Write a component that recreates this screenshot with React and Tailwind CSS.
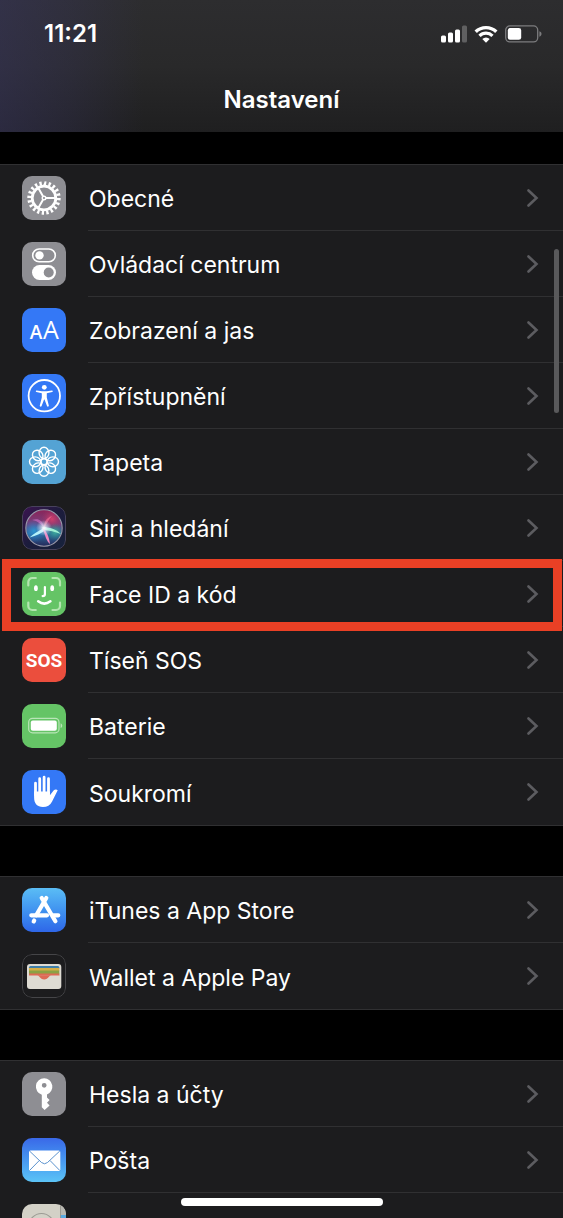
import clsx from "clsx";

function Tile({ className, children }) {
  return (
    <svg
      viewBox="0 0 44 44"
      className={clsx("h-11 w-11 shrink-0 rounded-[10px]", className)}
      fill="none"
      aria-hidden="true"
    >
      {children}
    </svg>
  );
}

function GearIcon() {
  return (
    <Tile className="bg-[#8e8e93]">
      <g stroke="#fff">
        <circle cx="22" cy="22" r="11.8" strokeWidth="2.8" />
        <circle cx="22" cy="22" r="14.8" strokeWidth="3.8" pathLength="80" strokeDasharray="2 2" />
        <circle cx="22" cy="22" r="1.8" strokeWidth="1.4" />
        <path d="M24 22H34M21 20.3 16 11.6M21 23.7 16 32.4" strokeWidth="2" />
      </g>
    </Tile>
  );
}

function ControlCenterIcon() {
  return (
    <Tile className="bg-[#8e8e93]">
      <rect x="10.7" y="7" width="22.6" height="12.8" rx="6.4" stroke="#fff" strokeWidth="1.6" />
      <circle cx="17.5" cy="13.4" r="4.2" fill="#fff" />
      <rect x="10" y="23" width="24" height="15" rx="7.5" fill="#fff" />
      <circle cx="26.7" cy="30.5" r="5" fill="#8e8e93" />
    </Tile>
  );
}

function DisplayIcon() {
  return (
    <Tile className="bg-[#3478f6]">
      <g fill="#fff" fontFamily="'Open Sans', sans-serif" textAnchor="middle">
        <text x="14" y="30.7" fontSize="19" fontWeight="600">A</text>
        <text x="29" y="30.7" fontSize="25" fontWeight="500">A</text>
      </g>
    </Tile>
  );
}

function AccessibilityIcon() {
  return (
    <Tile className="bg-[#3478f6]">
      <circle cx="22.3" cy="21.7" r="15.7" stroke="#fff" strokeWidth="1.8" />
      <circle cx="22.3" cy="13.3" r="2.4" fill="#fff" />
      <path
        d="M14.6 16.6c-.9-.1-1.1 1.2-.2 1.5l5.4 1.2v4.2l-2 8c-.3 1.2 1.4 1.6 1.8.5l2.500-6.600h.4l2.500 6.600c.4 1.100 2.100.7 1.800-.5l-2-8v-4.200l5.400-1.200c.9-.3.7-1.600-.2-1.500l-5.300.6h-4.800Z"
        fill="#fff"
      />
    </Tile>
  );
}

function WallpaperIcon() {
  return (
    <Tile className="bg-[#54a3d4]">
      <g stroke="#fff" strokeWidth="1.4">
        {[0, 45, 90, 135, 180, 225, 270, 315].map((angle) => (
          <ellipse key={angle} cx="22" cy="12.900" rx="4.900" ry="5.600" transform={`rotate(${angle} 22 21.8)`} />
        ))}
        <circle cx="22" cy="21.8" r="3" />
      </g>
    </Tile>
  );
}

function SiriIcon() {
  return (
    <Tile>
      <defs>
        <linearGradient id="siri-tile" x1="0" y1="0" x2="1" y2="1">
          <stop stopColor="#3b1450" />
          <stop offset=".5" stopColor="#1c1c3c" />
          <stop offset="1" stopColor="#17233c" />
        </linearGradient>
        <linearGradient id="siri-orb" x1="22" y1="4" x2="22" y2="40" gradientUnits="userSpaceOnUse">
          <stop stopColor="#8a2459" />
          <stop offset=".4" stopColor="#76427f" />
          <stop offset=".65" stopColor="#2d6fa0" />
          <stop offset="1" stopColor="#25295a" />
        </linearGradient>
        <radialGradient id="siri-teal" cx="12" cy="25" r="12" gradientUnits="userSpaceOnUse">
          <stop stopColor="#2c97d0" />
          <stop offset="1" stopColor="#2c70c0" stopOpacity="0" />
        </radialGradient>
        <radialGradient id="siri-red" cx="30" cy="13" r="11" gradientUnits="userSpaceOnUse">
          <stop stopColor="#d23f6d" />
          <stop offset="1" stopColor="#a03060" stopOpacity="0" />
        </radialGradient>
        <radialGradient id="siri-green" cx="33" cy="26" r="9" gradientUnits="userSpaceOnUse">
          <stop stopColor="#3fae9d" />
          <stop offset="1" stopColor="#2c7f80" stopOpacity="0" />
        </radialGradient>
        <radialGradient id="siri-glow" cx="22" cy="22" r="8" gradientUnits="userSpaceOnUse">
          <stop stopColor="#fff" />
          <stop offset="1" stopColor="#bfe8ff" stopOpacity="0" />
        </radialGradient>
      </defs>
      <rect x=".5" y=".5" width="43" height="43" rx="9.5" fill="url(#siri-tile)" stroke="#48425c" />
      <circle cx="22" cy="22" r="18" fill="url(#siri-orb)" />
      <circle cx="22" cy="22" r="18" fill="url(#siri-teal)" />
      <circle cx="22" cy="22" r="18" fill="url(#siri-red)" />
      <circle cx="22" cy="22" r="18" fill="url(#siri-green)" />
      <path d="M22 22C21 14 16 12 10 14c6 1 9 4 12 8Z" fill="#c76cc0" opacity=".7" />
      <path d="M22 22c0-6 2-10 8-12-4 4-5 8-8 12Z" fill="#f06c96" opacity=".7" />
      <path d="M24 21C20 23 14 26 7.5 31.5 14 30 20 27 25 23Z" fill="#b6f3fa" />
      <path d="M20 21.5C27 21 34 22.5 39 28 33 25.5 27 24.5 21 24Z" fill="#9ff0d4" />
      <path d="M20.5 21C25 26 27 31 28 38 25 36 23 30 20.5 21Z" fill="#ef87c3" />
      <circle cx="22" cy="22" r="8" fill="url(#siri-glow)" />
      <circle cx="22" cy="22" r="18.2" stroke="#9a9aab" strokeWidth="1.1" />
    </Tile>
  );
}

function FaceIdIcon() {
  return (
    <Tile className="bg-[#65c466]">
      <g strokeLinecap="round" strokeLinejoin="round">
        <path
          d="M6.3 13.5V10a4 4 0 0 1 4-4h3.5M30.5 6H34a4 4 0 0 1 4 4v3.5M38 30.5V34a4 4 0 0 1-4 4h-3.5M13.8 38h-3.5a4 4 0 0 1-4-4v-3.5"
          stroke="#b4e5b0"
          strokeWidth="2.2"
        />
        <path d="M22.9 15v7.2q0 1.9-2.3 1.9" stroke="#fff" strokeWidth="2.2" />
        <path d="M16.2 29.3q6 4.6 12.2 0" stroke="#fff" strokeWidth="2.6" />
      </g>
      <ellipse cx="13.9" cy="16.2" rx="1.9" ry="2.9" fill="#fff" />
      <ellipse cx="30.2" cy="16.2" rx="1.9" ry="2.9" fill="#fff" />
    </Tile>
  );
}

function SosIcon() {
  return (
    <Tile className="bg-[#eb4e3d]">
      <text
        x="22"
        y="29"
        textAnchor="middle"
        fill="#fff"
        fontFamily="Roboto, sans-serif"
        fontWeight="700"
        fontSize="19"
      >
        SOS
      </text>
    </Tile>
  );
}

function BatteryTileIcon() {
  return (
    <Tile className="bg-[#65c466]">
      <rect x="6.7" y="14.4" width="30.3" height="14.4" rx="3.8" stroke="#b9e5b7" strokeWidth="1.2" />
      <rect x="8.8" y="16.5" width="26" height="10.3" rx="2" fill="#fff" />
      <path d="M38.6 19.2c2.2.8 2.2 4 0 4.8Z" fill="#b9e5b7" />
    </Tile>
  );
}

function HandIcon() {
  return (
    <Tile className="bg-[#3478f6]">
      <path
        d="M13.5 13.2V25M17.7 8.7V24M22.1 7.2V24M26.5 8.7V24"
        stroke="#fff"
        strokeWidth="2.8"
        strokeLinecap="round"
      />
      <path
        d="M12.1 21.5h15.8v3.8l3.7-4.7c1.1-1.4 3.1-1.5 4.100-.4l-5.600 11.200c-1.900 3.900-4.900 5.600-9.200 5.600-5.800 0-8.800-3.700-8.800-9.500Z"
        fill="#fff"
      />
    </Tile>
  );
}

function AppStoreIcon() {
  return (
    <Tile className="bg-linear-to-b from-[#5bbdf5] to-[#2f66e8]">
      <g stroke="#fff" strokeWidth="4.2" strokeLinecap="round">
        <path d="M24.3 10 14.200 27.300M12.200 32.500l-.5.9M19.700 10 33.400 33.300" />
        <path d="M9.300 27.300H25M31.500 27.300h4.800" />
      </g>
    </Tile>
  );
}

function WalletIcon() {
  return (
    <Tile>
      <rect x=".5" y=".5" width="43" height="43" rx="9.5" fill="#1c1c1e" stroke="#454548" />
      <rect x="5" y="10" width="34.3" height="25" rx="3" fill="#dedbd3" />
      <path d="M7 14.500V13.500Q7 12 8.500 12h27.300q1.500 0 1.500 1.500v1Z" fill="#3f7fa8" />
      <path d="M7 14h30.300v3H7z" fill="#d5ad45" />
      <path d="M7 16.500h30.300v4H7z" fill="#8ba144" />
      <path d="M7 19.500h30.300V22H7z" fill="#dd6a55" />
      <path d="M7 21.500h30.300V33H7Z" fill="#dedbd3" />
      <path d="M15.300 21.300c2 0 2.500 4.200 6.900 4.200s4.900-4.200 6.900-4.200Z" fill="#dd6a55" />
    </Tile>
  );
}

function KeyIcon() {
  return (
    <Tile className="bg-[#8e8e93]">
      <path
        d="M22.200 6.200a8.500 8.500 0 0 0-2.400 16.600V35.200l2.800 2.800 5-4.600-2.600-2.600 2.600-2.700-2.600-2.600v-2.900A8.500 8.500 0 0 0 22.200 6.200Zm0 4.700a2.400 2.400 0 1 1 0 4.800 2.400 2.400 0 0 1 0-4.800Z"
        fill="#fff"
        fillRule="evenodd"
      />
    </Tile>
  );
}

function MailIcon() {
  return (
    <Tile className="bg-linear-to-b from-[#3a68e8] to-[#5cc3f6]">
      <rect x="7" y="12.5" width="31.3" height="20.5" rx="1.5" fill="#fff" />
      <path
        d="M7.500 13l12 11.500q3 2.600 6 0L37.800 13M7.500 32.500l9.800-10M37.800 32.500l-9.800-10"
        stroke="#4a87c8"
        strokeWidth=".9"
      />
    </Tile>
  );
}

function ContactsIcon() {
  return (
    <Tile className="bg-[#d3d1c7]">
      <path d="M38.500 0H44v11h-5.500z" fill="#b9b8b2" />
      <path d="M38.500 11H44v11h-5.500z" fill="#58a9e0" />
      <path d="M38.500 22H44v22h-5.500z" fill="#e0a050" />
      <path d="M38.500 0v44" stroke="#8f8e88" strokeWidth=".8" />
      <circle cx="19.5" cy="22" r="12.5" stroke="#9c9b94" strokeWidth="1.2" />
    </Tile>
  );
}

const groups = [
  [
    { label: "Obecné", Icon: GearIcon },
    { label: "Ovládací centrum", Icon: ControlCenterIcon },
    { label: "Zobrazení a jas", Icon: DisplayIcon },
    { label: "Zpřístupnění", Icon: AccessibilityIcon },
    { label: "Tapeta", Icon: WallpaperIcon },
    { label: "Siri a hledání", Icon: SiriIcon },
    { label: "Face ID a kód", Icon: FaceIdIcon, highlighted: true },
    { label: "Tíseň SOS", Icon: SosIcon },
    { label: "Baterie", Icon: BatteryTileIcon },
    { label: "Soukromí", Icon: HandIcon },
  ],
  [
    { label: "iTunes a App Store", Icon: AppStoreIcon },
    { label: "Wallet a Apple Pay", Icon: WalletIcon },
  ],
  [
    { label: "Hesla a účty", Icon: KeyIcon },
    { label: "Pošta", Icon: MailIcon },
    { label: "Kontakty", Icon: ContactsIcon, iconOnly: true },
  ],
];

function StatusBar() {
  return (
    <div className="flex h-9 items-center justify-between pr-[21px] pl-11">
      <time className="text-2xl font-semibold">11:21</time>
      <div className="flex items-center gap-[7px]">
        <svg width="26" height="18" viewBox="0 0 26 18" fill="#fff" aria-hidden="true">
          <rect x="0" y="10.5" width="5" height="7" rx="1.5" />
          <rect x="7" y="7.5" width="5" height="10" rx="1.5" />
          <rect x="14" y="4.5" width="5" height="13" rx="1.5" />
          <rect x="21" y=".5" width="5" height="17" rx="1.5" opacity=".25" />
        </svg>
        <svg width="24" height="18" viewBox="0 0 24 18" fill="none" aria-hidden="true">
          <path d="M1.700 6.800a14.800 14.800 0 0 1 20.600 0" stroke="#fff" strokeWidth="3.4" />
          <path d="M5.500 10.800a9.300 9.300 0 0 1 13 0" stroke="#fff" strokeWidth="3.2" />
          <path d="M8.300 14.100a5.200 5.200 0 0 1 7.400 0L12 17.800Z" fill="#fff" />
        </svg>
        <svg width="37" height="18" viewBox="0 0 37 18" fill="none" aria-hidden="true">
          <rect x=".7" y=".9" width="32" height="16" rx="4.2" stroke="#7c7c7e" strokeWidth="1.3" />
          <rect x="2.8" y="3" width="13.4" height="11.8" rx="2.4" fill="#fff" />
          <path d="M34.400 6.300c2.800.9 2.800 4.500 0 5.400Z" fill="#7c7c7e" />
        </svg>
      </div>
    </div>
  );
}

function Chevron() {
  return (
    <svg width="13" height="18" viewBox="0 0 13 18" fill="none" className="-mt-1" aria-hidden="true">
      <path d="m2.500 1.500 8 7.500-8 7.500" stroke="#5c5c60" strokeWidth="2.6" strokeLinecap="round" />
    </svg>
  );
}

function SettingsRow({ label, Icon, highlighted, iconOnly, last }) {
  return (
    <li className="relative">
      <a
        href="#"
        aria-label={iconOnly ? label : undefined}
        className="flex h-[66px] items-center gap-[22px] pl-[22px]"
      >
        <Icon />
        {!iconOnly && (
          <span
            className={clsx(
              "flex h-full flex-1 items-center justify-between pt-1 pr-6 pl-px",
              !last && "border-b border-[#303032]",
            )}
          >
            <span className="text-[23px]">{label}</span>
            <Chevron />
          </span>
        )}
      </a>
      {highlighted && (
        <div className="pointer-events-none absolute -top-0.5 right-px -bottom-1 left-0.5 border-9 border-[#ea4025]" />
      )}
    </li>
  );
}

export default function App() {
  return (
    <div className="relative flex h-screen flex-col overflow-hidden bg-black font-['Inter','Liberation_Sans',sans-serif] text-white">
      <header className="relative shrink-0 bg-linear-to-b from-[#2d2d2f] via-[#29292a] to-[#1f1f20] pt-4 pb-4">
        <div className="absolute inset-y-0 left-0 w-36 bg-linear-to-r from-[#3a3766]/45 via-[#3a3766]/25 to-transparent" />
        <div className="relative">
          <StatusBar />
          <h1 className="mt-8 text-center text-2xl font-semibold">Nastavení</h1>
        </div>
      </header>

      <main className="flex-1 space-y-[50px] overflow-y-auto pt-8 [scrollbar-width:none]">
        {groups.map((rows) => (
          <ul key={rows[0].label} className="border-y border-[#303032] bg-[#1c1c1e]">
            {rows.map((row, index) => (
              <SettingsRow key={row.label} {...row} last={index === rows.length - 1} />
            ))}
          </ul>
        ))}
      </main>

      {/* scroll thumb and home indicator */}
      <div className="absolute top-[249px] right-1 h-41 w-[5px] rounded-full bg-[#59595b]" />
      <div className="absolute bottom-3 left-1/2 h-2 w-[202px] -translate-x-1/2 rounded-full bg-white" />
    </div>
  );
}
